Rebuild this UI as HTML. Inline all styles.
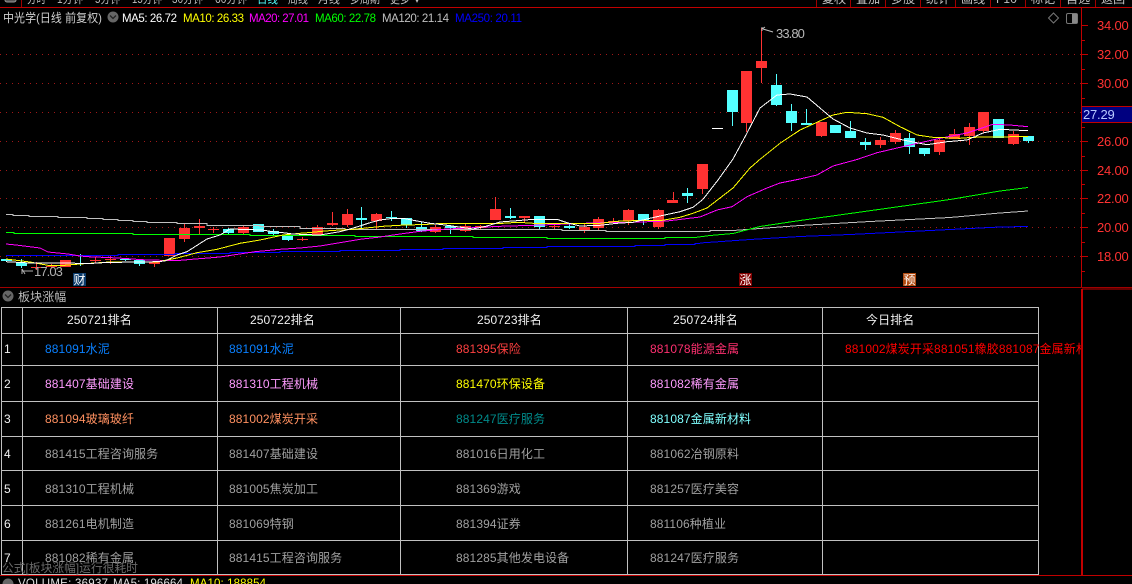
<!DOCTYPE html>
<html lang="zh"><head><meta charset="utf-8"><title>中光学</title>
<style>
html,body{margin:0;padding:0;background:#000;width:1132px;height:584px;overflow:hidden}
svg{position:absolute;left:0;top:0}
text{font-family:"Liberation Sans","WenQuanYi Zen Hei","Noto Sans CJK SC",sans-serif;font-size:12px;letter-spacing:.1px}
.ax{fill:#ff3232;font-size:13px;letter-spacing:-.2px}
.g{fill:#a0a0a0}
.n{font-size:11.5px;letter-spacing:0}
.l{fill:none;stroke-width:1;shape-rendering:crispEdges}
</style></head><body>
<svg width="1132" height="584" viewBox="0 0 1132 584">
<defs>
<clipPath id="top"><rect x="0" y="0" width="1132" height="7"/></clipPath>
<clipPath id="rc"><rect x="0" y="0" width="1081" height="584"/></clipPath>
</defs>
<!-- toolbar -->
<g clip-path="url(#top)" fill="#c0c0c0">
<rect x="5" y="-8" width="11" height="10" rx="2" fill="#555" stroke="#999"/>
<text x="27" y="3" fill="#c0c0c0" textLength="19" lengthAdjust="spacingAndGlyphs">分时</text><text x="57" y="3" fill="#c0c0c0" textLength="26" lengthAdjust="spacingAndGlyphs">1分钟</text><text x="95" y="3" fill="#c0c0c0" textLength="25" lengthAdjust="spacingAndGlyphs">5分钟</text><text x="132" y="3" fill="#c0c0c0" textLength="30" lengthAdjust="spacingAndGlyphs">15分钟</text><text x="172" y="3" fill="#c0c0c0" textLength="31" lengthAdjust="spacingAndGlyphs">30分钟</text><text x="215" y="3" fill="#c0c0c0" textLength="32" lengthAdjust="spacingAndGlyphs">60分钟</text><text x="257" y="3" fill="#54ffff" textLength="21" lengthAdjust="spacingAndGlyphs">日线</text><text x="288" y="3" fill="#c0c0c0" textLength="20" lengthAdjust="spacingAndGlyphs">周线</text><text x="318" y="3" fill="#c0c0c0" textLength="22" lengthAdjust="spacingAndGlyphs">月线</text><text x="350" y="3" fill="#c0c0c0" textLength="30" lengthAdjust="spacingAndGlyphs">多周期</text><text x="390" y="3" fill="#c0c0c0" textLength="20" lengthAdjust="spacingAndGlyphs">更多</text><text x="414" y="3" fill="#c0c0c0">▾</text>
<text x="822" y="3" fill="#c0c0c0">复权</text><text x="856" y="3" fill="#c0c0c0">叠加</text><text x="891" y="3" fill="#c0c0c0">多股</text><text x="926" y="3" fill="#c0c0c0">统计</text><text x="961" y="3" fill="#c0c0c0">画线</text><text x="996" y="3" fill="#c0c0c0">F10</text><text x="1031" y="3" fill="#c0c0c0">标记</text><text x="1066" y="3" fill="#c0c0c0">自选</text><text x="1101" y="3" fill="#c0c0c0">返回</text>
</g>
<g shape-rendering="crispEdges">
<path d="M0 7.5H1132" stroke="#c00000"/>
<path d="M21.5 0V7M816.5 0V7M850.5 0V7M885.5 0V7M920.5 0V7M955.5 0V7M990.5 0V7M1025.5 0V7M1060.5 0V7M1095.5 0V7" stroke="#a00000"/>
<!-- grid -->
<path d="M0 54.5H1082M0 83.5H1082M0 112.5H1082M0 141.5H1082M0 170.5H1082M0 198.5H1082M0 227.5H1082M0 256.5H1082" stroke="#a01818" stroke-dasharray="1 5"/>
<!-- axis -->
<path d="M1081.5 8V288" stroke="#c00000"/>
<path d="M1082 25.5h6M1082 54.5h6M1082 83.5h6M1082 112.5h6M1082 141.5h6M1082 170.5h6M1082 198.5h6M1082 227.5h6M1082 256.5h6M1082 40.5h3M1082 69.5h3M1082 98.5h3M1082 127.5h3M1082 156.5h3M1082 184.5h3M1082 213.5h3M1082 242.5h3M1082 271.5h3" stroke="#c00000"/>
<!-- red candles -->
<path fill="#ff3232" d="M31 267h11v1h-11zM46 266h11v1h-11zM60 260h11v7h-11zM90 260h11v1h-11zM105 259h11v1h-11zM149 262h11v2h-11zM164 238h11v18h-11zM179 228h11v11h-11zM194 226h11v2h-11zM208 229h11v1h-11zM238 227h11v6h-11zM297 239h11v1h-11zM312 227h11v8h-11zM327 223h11v2h-11zM342 214h11v11h-11zM371 214h11v7h-11zM430 227h11v5h-11zM460 226h11v5h-11zM475 226h11v2h-11zM490 209h11v11h-11zM519 216h11v2h-11zM549 226h11v1h-11zM579 227h11v3h-11zM593 219h11v9h-11zM608 221h11v2h-11zM623 210h11v11h-11zM653 210h11v17h-11zM667 200h11v3h-11zM697 164h11v25h-11zM741 71h11v52h-11zM756 61h11v7h-11zM816 122h11v14h-11zM875 140h11v5h-11zM890 133h11v9h-11zM934 140h11v12h-11zM949 134h11v5h-11zM964 127h11v9h-11zM978 112h11v19h-11zM1008 134h11v10h-11z"/>
<path stroke="#ff3232" d="M36.5 262V270M51.500 264V268M95.500 257V263M110.500 256V264M154.500 262V267M184.500 224V242M199.500 219V234M213.500 227V233M243.500 225V235M302.500 237V241M317.500 225V235M332.500 212V226M347.500 209V227M376.500 213V230M435.500 225V233M465.500 223V232M480.500 225V229M495.500 197V220M524.500 216V223M554.500 224V229M584.500 224V233M598.500 217V230M613.500 218V224M628.500 209V225M658.500 209V229M673.500 192V203M702.500 164V194M746.500 71V132M761.500 28V83M821.500 122V137M880.500 137V148M895.500 130V144M939.500 137V155M954.500 129V139M969.500 123V145M983.500 112V133M1013.500 131V145"/>
<!-- cyan candles -->
<path fill="#54ffff" d="M1 259h11v2h-11zM16 263h11v3h-11zM120 259h11v1h-11zM134 260h11v4h-11zM75 263h11v1h-11zM223 229h11v4h-11zM253 224h11v8h-11zM268 231h11v3h-11zM282 235h11v5h-11zM356 218h11v2h-11zM386 217h11v1h-11zM401 218h11v7h-11zM416 227h11v4h-11zM445 226h11v2h-11zM505 216h11v2h-11zM534 216h11v11h-11zM564 226h11v2h-11zM638 214h11v7h-11zM682 193h11v3h-11zM727 90h11v22h-11zM771 85h11v20h-11zM786 111h11v12h-11zM801 123h11v2h-11zM830 125h11v8h-11zM845 131h11v7h-11zM860 142h11v3h-11zM904 138h11v9h-11zM919 148h11v6h-11zM993 119h11v19h-11zM1023 136h11v5h-11z"/>
<path stroke="#54ffff" d="M21.500 259V268M80.500 254V266M125.500 258V261M139.500 259V266M228.500 228V234M273.500 229V235M288.500 234V241M361.500 207V229M391.500 211V221M406.500 218V228M421.500 222V232M450.500 225V234M510.500 208V219M539.500 216V229M569.500 224V229M643.500 214V225M687.500 188V203M732.500 90V126M776.500 74V106M791.500 104V131M806.500 109V125M850.500 121V138M865.500 138V150M909.500 133V154M924.500 148V156M1028.500 136V143"/>
<path stroke="#fff" d="M712 128.500h11"/>
<!-- price box -->
<rect x="1082" y="107" width="50" height="15" fill="#000080"/>
<path d="M1082 106.500H1132M1082 122.500H1132" stroke="#c00000"/>
</g>
<!-- MA120 / MA60 / MA250 -->
<path class="l" stroke="#c0c0c0" d="M6 214.500H13V215.500H29V216.500H58V217.500H87V218.500H103V219.500H118V220.500H133V221.500H147V222.500H177V223.500H207V225.500H260V226.500H300V228.500H345V229.500H562V230.500H606V231.500H710V230.500H733"/>
<polyline class="l" stroke="#c0c0c0" points="733,230.500 800,225.500 870,221.500 950,217.500 1000,213 1028,211"/>
<path class="l" stroke="#00ff00" d="M6 232.500H14V233.500H133V234.500H250V235.500H355V236.500H473V237.500H547V238.500H665V237.500H695"/>
<polyline class="l" stroke="#00ff00" points="695,237.500 710,235.500 733,233.500 760,226.500 800,220.500 850,213.500 900,206.500 950,199.500 1000,191 1028,187.500"/>
<path class="l" stroke="#0000ff" d="M6 255.500H118V254.500H175V253.500H230V252.500H280V251.500H340V250.500H400V249.500H443V248.500H503V247.500H547V246.500H635V245.500H665V244.500H695V243.500H700"/>
<polyline class="l" stroke="#0000ff" points="700,243 750,239.500 800,236.500 850,234.500 900,232 950,229.500 1000,227 1028,226.500"/>
<!-- smooth MAs -->
<polyline class="l" stroke="#ff00ff" points="6,244 16,245 40,248 48,252 58,253 68,254 80,256 88,256.700 118,258 147,260 177,260.600 192,259.300 208,258 220,257 233,255 255,251.700 280,249.300 300,248 320,246 340,242.700 360,239.300 380,237 400,234 420,231.300 443,229.300 467,228 500,226.300 533,225.300 567,224 600,222.700 633,222.300 667,221 700,217 717,210 732,206.700 747,196.700 767,188 780,183 800,179 817,175 833,166 857,159.500 877,152.700 907,145.700 940,138.300 967,133 993,124.300 1010,125 1028,126.700"/>
<polyline class="l" stroke="#ffff00" points="6,259 30,262 50,265.700 60,265.700 80,264 110,262 133,262 157,262 177,258 197,252.700 217,249.300 240,243.300 260,240 283,235 300,233.300 310,232.500 325,231 340,230 353,229.300 373,227.300 383,226.300 399,225.300 428,224.300 443,223.300 503,223.300 518,222.300 533,223.300 600,223.300 617,221.300 633,220.700 660,220.700 680,217.300 693,213.300 707,208 720,198 733,188 750,168 760,159.300 780,143.300 800,130 817,122.300 833,115 847,112.300 867,113.700 883,117.300 900,126.700 917,135 933,137.300 960,138.300 973,137.300 1013,136.700 1028,136.700"/>
<polyline class="l" stroke="#ffffff" points="6,261.700 30,263 60,263 90,263.500 103,262.700 133,262 157,261.700 165,261 177,255 187,251.700 207,239 220,235 230,229 262,230 273,231.700 283,232.700 293,234 310,234.700 320,235 330,233.300 340,231.700 350,229 360,226 370,222.700 380,220 390,218.700 403,218.300 417,221 430,223.300 445,225 473,229 487,226 500,222 517,220.700 533,219.300 557,219.300 567,222.700 580,226 600,225.300 617,223.300 633,222.300 650,218.300 660,216 680,211.700 693,207.300 703,199.300 718,180 733,159 747,133 760,108 777,95 790,94 807,97 820,108 833,119 850,128 867,133 883,135 903,140 927,144.700 947,141.700 967,140 983,133 1000,129.300 1028,130.700"/>
<!-- legend -->
<text x="3" y="22" fill="#d0d0d0" textLength="99" lengthAdjust="spacingAndGlyphs">中光学(日线 前复权)</text>
<circle cx="113" cy="17" r="5.500" fill="#666"/><path d="M110 15.500l3 3 3-3" stroke="#222" stroke-width="1.300" fill="none"/>
<text class="n" x="122" y="22" fill="#fff" textLength="55">MA5: 26.72</text>
<text class="n" x="183" y="22" fill="#ffff00" textLength="61">MA10: 26.33</text>
<text class="n" x="249" y="22" fill="#ff00ff" textLength="60">MA20: 27.01</text>
<text class="n" x="315" y="22" fill="#00ff00" textLength="61">MA60: 22.78</text>
<text class="n" x="382" y="22" fill="#c0c0c0" textLength="67">MA120: 21.14</text>
<text class="n" x="455" y="22" fill="#0000ff" textLength="67">MA250: 20.11</text>
<!-- top right icons -->
<path d="M1053.500 13l5 5-5 5-5-5z" fill="none" stroke="#777"/>
<rect x="1066.500" y="13.500" width="11" height="10" rx="1.500" fill="none" stroke="#777"/><rect x="1072" y="14" width="5" height="9" fill="#888"/>
<!-- axis labels -->
<text class="ax" x="1097" y="30">34.00</text><text class="ax" x="1097" y="59">32.00</text><text class="ax" x="1097" y="88">30.00</text><text class="ax" x="1097" y="146">26.00</text><text class="ax" x="1097" y="175">24.00</text><text class="ax" x="1097" y="203">22.00</text><text class="ax" x="1097" y="232">20.00</text><text class="ax" x="1097" y="261">18.00</text>
<text x="1083" y="119" style="font-size:13px;letter-spacing:-.2px" fill="#b8c8ff">27.29</text>
<!-- annotations -->
<path d="M773 32l-10-3M762 27v4M762 29l3-2" stroke="#c0c0c0" fill="none"/>
<text x="776" y="38" style="font-size:13px" fill="#b8b8b8" textLength="29">33.80</text>
<path d="M22 269l3 5M22 269v5M22 271h11" stroke="#b0b0b0" fill="none"/>
<text x="34" y="276" style="font-size:13px" fill="#b0b0b0" textLength="29">17.03</text>
<rect x="73" y="273" width="13" height="13" fill="#0a3a6a"/><text x="73.500" y="284" fill="#fff">财</text>
<rect x="739" y="273" width="13" height="13" fill="#800000"/><text x="739.500" y="284" fill="#fff">涨</text>
<rect x="903" y="273" width="13" height="13" fill="#b04a10"/><text x="903.500" y="284" fill="#fff">预</text>
<!-- section -->
<g shape-rendering="crispEdges">
<path d="M0 287.500H1132" stroke="#a00000"/>
<path d="M1082 289V575" stroke="#c00000" stroke-width="2"/>
<path d="M1082 289H1132" stroke="#c00000" stroke-width="1"/>
<path d="M0 575.500H1132" stroke="#c00000"/>
</g>
<circle cx="8" cy="296" r="5.500" fill="#666"/><path d="M5 294.500l3 3 3-3" stroke="#222" stroke-width="1.300" fill="none"/>
<text x="18" y="301" fill="#b8b8b8">板块涨幅</text>
<!-- table -->
<g shape-rendering="crispEdges" stroke="#c0c0c0" fill="none">
<path d="M1.500 307.500H1038.500M1.500 333.500H1038.500M1.500 365.500H1038.500M1.500 401.500H1038.500M1.500 436.500H1038.500M1.500 470.500H1038.500M1.500 505.500H1038.500M1.500 540.500H1038.500M1.500 574.500H1038.500"/>
<path d="M1.500 307V575M22.500 307V575M217.500 307V575M400.500 307V575M627.500 307V575M822.500 307V575M1038.500 307V575"/>
</g>
<g fill="#f0f0f0">
<text x="67" y="324" fill="#f0f0f0">250721排名</text><text x="250" y="324" fill="#f0f0f0">250722排名</text><text x="477" y="324" fill="#f0f0f0">250723排名</text><text x="673" y="324" fill="#f0f0f0">250724排名</text><text x="866" y="324" fill="#f0f0f0">今日排名</text>
<text x="4" y="353">1</text><text x="4" y="388">2</text><text x="4" y="423">3</text><text x="4" y="458">4</text><text x="4" y="493">5</text><text x="4" y="528">6</text><text x="4" y="562">7</text>
</g>
<text x="45" y="353" fill="#0a80ff">881091水泥</text><text x="229" y="353" fill="#0a80ff">881091水泥</text><text x="456" y="353" fill="#ff4040">881395保险</text><text x="650" y="353" fill="#ff3070">881078能源金属</text>
<text x="845" y="353" fill="#ff0000" clip-path="url(#rc)">881002煤炭开采881051橡胶881087金属新材料</text>
<text x="45" y="388" fill="#ff9cff">881407基础建设</text><text x="229" y="388" fill="#ff9cff">881310工程机械</text><text x="456" y="388" fill="#ffff00">881470环保设备</text><text x="650" y="388" fill="#ff9cff">881082稀有金属</text>
<text x="45" y="423" fill="#ff9060">881094玻璃玻纤</text><text x="229" y="423" fill="#ff9060">881002煤炭开采</text><text x="456" y="423" fill="#008b8b">881247医疗服务</text><text x="650" y="423" fill="#80ffff">881087金属新材料</text>
<g class="g">
<text x="45" y="458" class="g">881415工程咨询服务</text><text x="229" y="458" class="g">881407基础建设</text><text x="456" y="458" class="g">881016日用化工</text><text x="650" y="458" class="g">881062冶钢原料</text>
<text x="45" y="493" class="g">881310工程机械</text><text x="229" y="493" class="g">881005焦炭加工</text><text x="456" y="493" class="g">881369游戏</text><text x="650" y="493" class="g">881257医疗美容</text>
<text x="45" y="528" class="g">881261电机制造</text><text x="229" y="528" class="g">881069特钢</text><text x="456" y="528" class="g">881394证券</text><text x="650" y="528" class="g">881106种植业</text>
<text x="45" y="562" class="g">881082稀有金属</text><text x="229" y="562" class="g">881415工程咨询服务</text><text x="456" y="562" class="g">881285其他发电设备</text><text x="650" y="562" class="g">881247医疗服务</text>
</g>
<text x="2" y="572" fill="#6a6a6a" textLength="136" lengthAdjust="spacingAndGlyphs">公式[板块涨幅]运行很耗时</text>
<!-- bottom -->
<circle cx="8" cy="584" r="5.500" fill="#666"/>
<text class="n" x="18" y="587" fill="#e0e0e0" textLength="90">VOLUME: 36937</text><text class="n" x="113" y="587" fill="#e0e0e0" textLength="70">MA5: 196664</text><text class="n" x="190" y="587" fill="#ffff00" textLength="76">MA10: 188854</text>
</svg>
</body></html>
